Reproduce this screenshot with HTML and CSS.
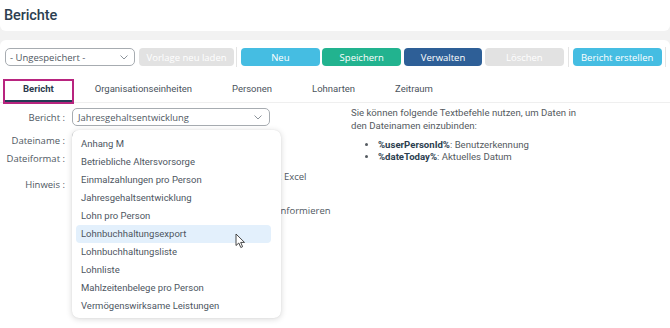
FILE: index.html
```html
<!DOCTYPE html>
<html lang="de">
<head>
<meta charset="utf-8">
<title>Berichte</title>
<link rel="stylesheet" href="styles.css">
</head>
<body>
<header class="page-header"><h1 class="title">Berichte</h1></header>
<main class="card">
  <div class="toolbar">
    <div class="select select-template"><span class="select-text">- Ungespeichert -</span><svg class="chev" width="8" height="5" viewBox="0 0 8 5"><path d="M0.5 0.5 L4 4 L7.5 0.5" fill="none" stroke="#8d949b" stroke-width="1"/></svg></div>
    <button class="btn btn-disabled btn-wide">Vorlage neu laden</button>
    <span class="sep"></span>
    <button class="btn btn-cyan">Neu</button>
    <button class="btn btn-green">Speichern</button>
    <button class="btn btn-navy">Verwalten</button>
    <button class="btn btn-disabled">Löschen</button>
    <span class="sep"></span>
    <button class="btn btn-cyan btn-create">Bericht erstellen</button>
    <span class="sep"></span>
  </div>
  <nav class="tabs">
    <div class="tab active">Bericht</div>
    <div class="tab">Organisationseinheiten</div>
    <div class="tab">Personen</div>
    <div class="tab">Lohnarten</div>
    <div class="tab">Zeitraum</div>
  </nav>
  <section class="content">
    <div class="form">
      <div class="row row-report">
        <span class="label">Bericht :</span>
        <div class="select select-report"><span class="select-text">Jahresgehaltsentwicklung</span><svg class="chev" width="8" height="5" viewBox="0 0 8 5"><path d="M0.5 0.5 L4 4 L7.5 0.5" fill="none" stroke="#8d949b" stroke-width="1"/></svg></div>
      </div>
      <div class="row row-name">
        <span class="label">Dateiname :</span>
        <div class="input"></div>
      </div>
      <div class="row row-format">
        <span class="label">Dateiformat :</span>
        <div class="value"></div>
      </div>
      <div class="row row-hint">
        <span class="label label-hint">Hinweis :</span>
        <div class="hint">
          <div class="hint-line line-excel"><span class="hint-lead"></span><span>: Excel</span></div>
          <div class="hint-line line-mail"><span class="hint-lead"></span><span>informieren</span></div>
        </div>
      </div>
    </div>
    <div class="help">
      <p class="help-text">Sie können folgende Textbefehle nutzen, um Daten in den Dateinamen einzubinden:</p>
      <ul class="help-list">
        <li><b>%userPersonId%</b>: Benutzerkennung</li>
        <li><b>%dateToday%</b>: Aktuelles Datum</li>
      </ul>
    </div>
  </section>
  <ul class="dropdown">
    <li class="item">Anhang M</li>
    <li class="item">Betriebliche Altersvorsorge</li>
    <li class="item">Einmalzahlungen pro Person</li>
    <li class="item">Jahresgehaltsentwicklung</li>
    <li class="item">Lohn pro Person</li>
    <li class="item hover">Lohnbuchhaltungsexport</li>
    <li class="item">Lohnbuchhaltungsliste</li>
    <li class="item">Lohnliste</li>
    <li class="item">Mahlzeitenbelege pro Person</li>
    <li class="item">Vermögenswirksame Leistungen</li>
  </ul>
  <svg class="cursor" width="11" height="16" viewBox="0 0 11 16"><path d="M1 1 L1 12.5 L3.8 10 L5.8 14.5 L7.6 13.7 L5.7 9.4 L9.5 9.4 Z" fill="#fff" stroke="#333" stroke-width="0.9" stroke-linejoin="round"/></svg>
</main>
</body>
</html>
```

FILE: styles.css
```css
* { box-sizing: border-box; }

html, body {
  margin: 0;
  padding: 0;
}

body {
  width: 670px;
  height: 328px;
  overflow: hidden;
  background: #f2f2f2;
  font-family: "Open Sans", "Liberation Sans", sans-serif;
  color: #555;
}

.page-header {
  height: 31px;
  background: #fff;
  border-radius: 0 0 6px 6px;
  display: flex;
  align-items: center;
  padding-left: 4px;
}

.title {
  margin: 0;
  font-family: Roboto, sans-serif;
  font-weight: 500;
  font-size: 14.5px;
  color: #2c3e50;
  letter-spacing: -0.1px;
}

.card {
  position: relative;
  margin-top: 9px;
  height: 288px;
  background: #fff;
  border-radius: 6px 6px 0 0;
}

.toolbar {
  display: flex;
  align-items: center;
  padding: 8px 0 0 5px;
  height: 26px;
}

.select {
  display: flex;
  align-items: center;
  justify-content: space-between;
  height: 18px;
  border: 1px solid #a7acb1;
  border-radius: 5px;
  background: #fff;
  font-size: 9.5px;
  color: #4f5862;
}

.select-template {
  width: 130px;
  padding: 0 6px 0 4px;
}

.select-text {
  white-space: nowrap;
}

.btn {
  height: 18px;
  width: 79px;
  border: none;
  border-radius: 4px;
  padding: 0;
  font-family: "Open Sans", sans-serif;
  font-size: 9.5px;
  color: #fff;
  margin-right: 2.5px;
}

.btn-wide {
  width: 96px;
  margin-left: 4px;
  margin-right: 0;
}

.btn-disabled { background: #e2e2e2; }
.btn-cyan { background: #45bde2; }
.btn-green { background: #22b38f; }
.btn-navy { background: #2e5f97; }

.btn-create {
  width: 89px;
  margin-right: 0;
}

.sep {
  width: 1px;
  height: 20px;
  background: #e4e4e4;
  margin: 0 4px 0 3.5px;
}

.btn-disabled + .sep { margin-left: 1.5px; }

.tabs {
  display: flex;
  gap: 4px;
  margin-top: 15px;
  padding-left: 5px;
  height: 22px;
  border-bottom: 1px solid #efefef;
}

.tab {
  height: 21px;
  padding: 1px 18px 0;
  font-family: Roboto, sans-serif;
  font-size: 9.5px;
  line-height: 14px;
  color: #4a535c;
  white-space: nowrap;
}

.tab.active {
  font-weight: 700;
  color: #2b3a4d;
  border-bottom: 2px solid #263a56;
  outline: 2px solid #b8247f;
  outline-offset: 0;
  margin-right: 1px;
}

.content {
  display: flex;
  padding-top: 5px;
}

.form {
  width: 346px;
  flex: none;
}

.row {
  display: grid;
  grid-template-columns: 65px 1fr;
  column-gap: 7px;
  align-items: center;
}

.label {
  text-align: right;
  font-size: 9.5px;
  color: #4f5862;
  white-space: nowrap;
}

.select-report {
  width: 198px;
  padding: 0 7px 0 5px;
  font-size: 9.4px;
}

.row-report { height: 18px; }

.row-name {
  height: 18px;
  margin-top: 5px;
}

.input {
  width: 198px;
  height: 18px;
  border: 1px solid #a7acb1;
  border-radius: 5px;
}

.row-format {
  height: 17px;
  margin-top: 1px;
}

.row-hint {
  align-items: start;
  margin-top: 1px;
}

.label-hint {
  margin-top: 10px;
}

.hint {
  font-size: 9.5px;
  color: #4f5862;
}

.hint-line {
  display: flex;
  white-space: nowrap;
  height: 17px;
  align-items: center;
}

.hint-lead {
  display: inline-block;
  width: 207px;
}

.line-mail {
  margin-top: 17px;
}

.line-mail .hint-lead { width: 206px; }

.help {
  margin-top: -2px;
  padding-left: 5px;
  font-family: Roboto, sans-serif;
  font-size: 9.6px;
  color: #555b61;
}

.help-text {
  margin: 0;
  width: 235px;
  line-height: 13px;
}

.help-list {
  margin: 7px 0 0;
  padding-left: 27px;
  line-height: 12px;
}

.help-list b {
  color: #2c3e50;
}

.dropdown {
  position: absolute;
  left: 72px;
  top: 90px;
  width: 209px;
  height: 188px;
  margin: 0;
  padding: 4.5px 10px 2px 4px;
  list-style: none;
  background: #fff;
  border-radius: 7px;
  box-shadow: 0 1px 6px rgba(0, 0, 0, 0.16), 0 0 1px rgba(0, 0, 0, 0.12);
}

.item {
  height: 18.1px;
  line-height: 18px;
  padding-left: 5px;
  font-family: Roboto, sans-serif;
  font-size: 9.5px;
  color: #4d565f;
  border-radius: 4px;
  white-space: nowrap;
}

.item.hover {
  background: #e3f0fc;
}

.cursor {
  position: absolute;
  left: 235px;
  top: 193px;
}
```
